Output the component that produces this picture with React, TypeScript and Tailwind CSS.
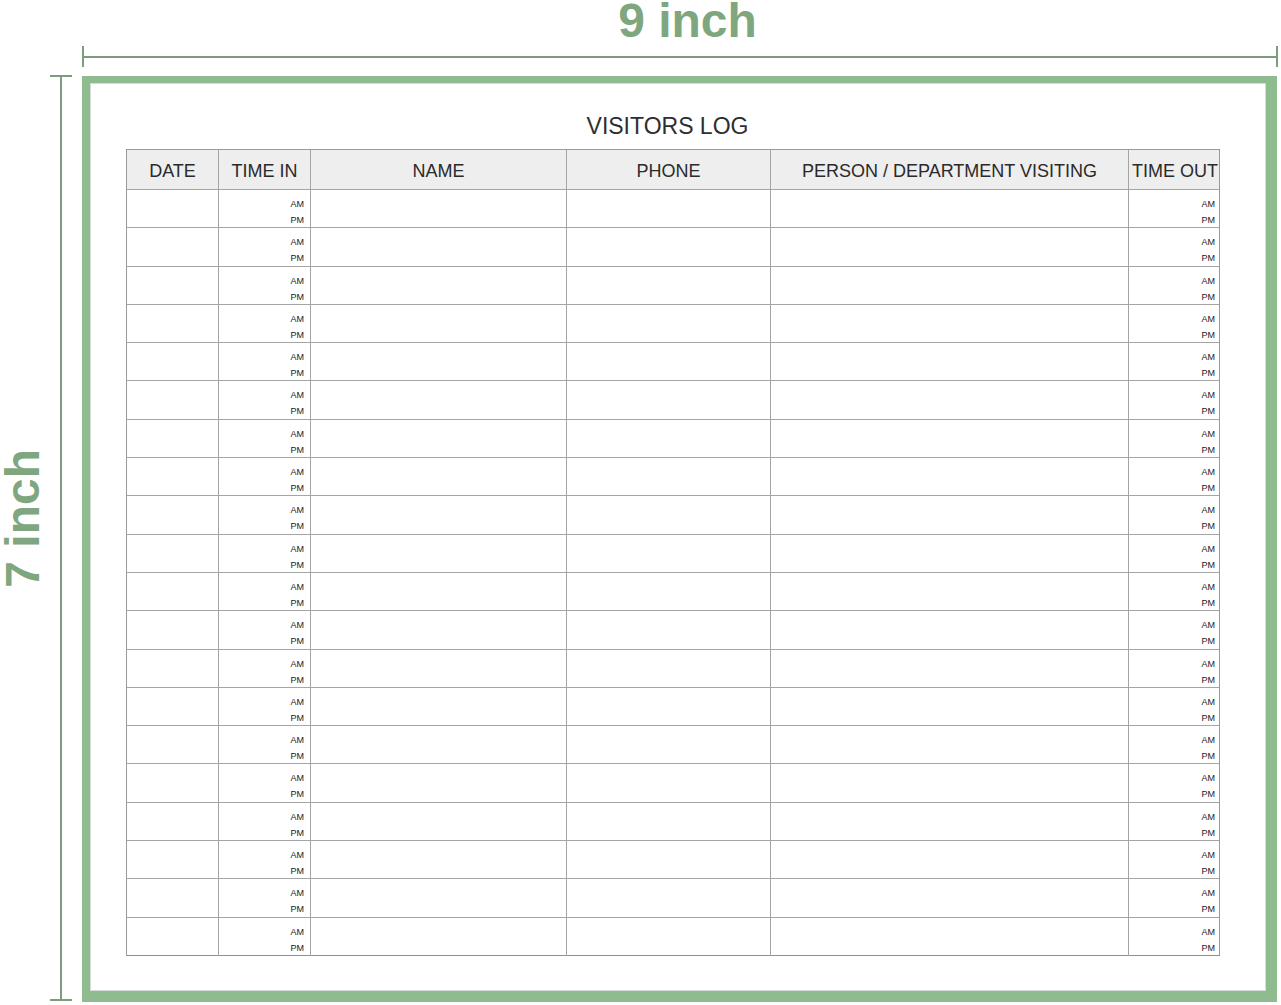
const columns = [
  { label: 'DATE', time: false },
  { label: 'TIME IN', time: true },
  { label: 'NAME', time: false },
  { label: 'PHONE', time: false },
  { label: 'PERSON / DEPARTMENT VISITING', time: false },
  { label: 'TIME OUT', time: true },
];

const rows = Array.from({ length: 20 }, (_, i) => i);

function TimeCell() {
  return (
    <div className="flex flex-col items-end pt-[6px] pr-[6px] text-[9px] leading-[16px] text-[#1a1a1a]">
      <span>AM</span>
      <span>PM</span>
    </div>
  );
}

export default function App() {
  return (
    <div
      className="w-[1281px] h-[1005px] bg-white flex flex-col overflow-hidden"
      style={{ fontFamily: '"Liberation Sans", Arial, sans-serif' }}
    >
      {/* top dimension */}
      <div className="h-[75px] pl-[82px] flex flex-col w-[1278px]">
        <div className="h-[46px] flex justify-center pl-[15px]">
          <span className="text-[48px] leading-[42px] h-[42px] font-bold text-[#7fa77f]">9 inch</span>
        </div>
        <div className="h-[21px] flex items-center">
          <div className="w-[2px] h-[21px] bg-[#7d9c7d]" />
          <div className="flex-1 h-[2px] bg-[#7d9c7d]" />
          <div className="w-[2px] h-[21px] bg-[#7d9c7d]" />
        </div>
      </div>

      <div className="flex">
        {/* left dimension */}
        <div className="w-[82px] h-[926px] flex">
          <div className="w-[46px] mr-[4px] flex items-center justify-center pb-[40px]">
            <span className="[writing-mode:vertical-rl] rotate-180 whitespace-nowrap text-[48px] leading-[42px] w-[42px] font-bold text-[#7fa77f]">
              7 inch
            </span>
          </div>
          <div className="w-[22px] flex flex-col items-center">
            <div className="w-[22px] h-[2px] bg-[#7d9c7d]" />
            <div className="flex-1 w-[2px] bg-[#7d9c7d]" />
            <div className="w-[22px] h-[2px] bg-[#7d9c7d]" />
          </div>
        </div>

        {/* frame */}
        <div className="w-[1195px] h-[926px] mt-[1px] border-t-[7px] border-l-[8px] border-r-[11px] border-b-[11px] border-[#8fbc8f]">
          <div className="h-full border border-[#d3ddd3] pl-[35px] pt-[31px]">
            <div className="w-[1094px] flex justify-center pr-[11px]">
              <h1 className="text-[23px] leading-none text-[#2e2e2e]">VISITORS LOG</h1>
            </div>

            <div className="w-[1094px] mt-[11px] border-t border-l border-r border-[#9a9a9a]">
              <div className="grid grid-cols-[92px_92px_256px_204px_358px_92px] h-[40px] bg-[#eeeeee] border-b border-[#a5a5a5]">
                {columns.map((c, i) => (
                  <div
                    key={c.label}
                    className={`flex items-center justify-center pt-[2px] text-[18px] leading-none text-[#2a2a2a] whitespace-nowrap ${
                      i < columns.length - 1 ? 'border-r border-[#a5a5a5]' : ''
                    }`}
                  >
                    {c.label}
                  </div>
                ))}
              </div>

              {rows.map((r) => (
                <div
                  key={r}
                  className={`grid grid-cols-[92px_92px_256px_204px_358px_92px] h-[38.3px] border-b ${
                    r === rows.length - 1 ? 'border-[#8e8e8e]' : 'border-[#a5a5a5]'
                  }`}
                >
                  {columns.map((c, i) => (
                    <div
                      key={c.label}
                      className={i < columns.length - 1 ? 'border-r border-[#a5a5a5]' : ''}
                    >
                      {c.time && <TimeCell />}
                    </div>
                  ))}
                </div>
              ))}
            </div>
          </div>
        </div>
      </div>
    </div>
  );
}
